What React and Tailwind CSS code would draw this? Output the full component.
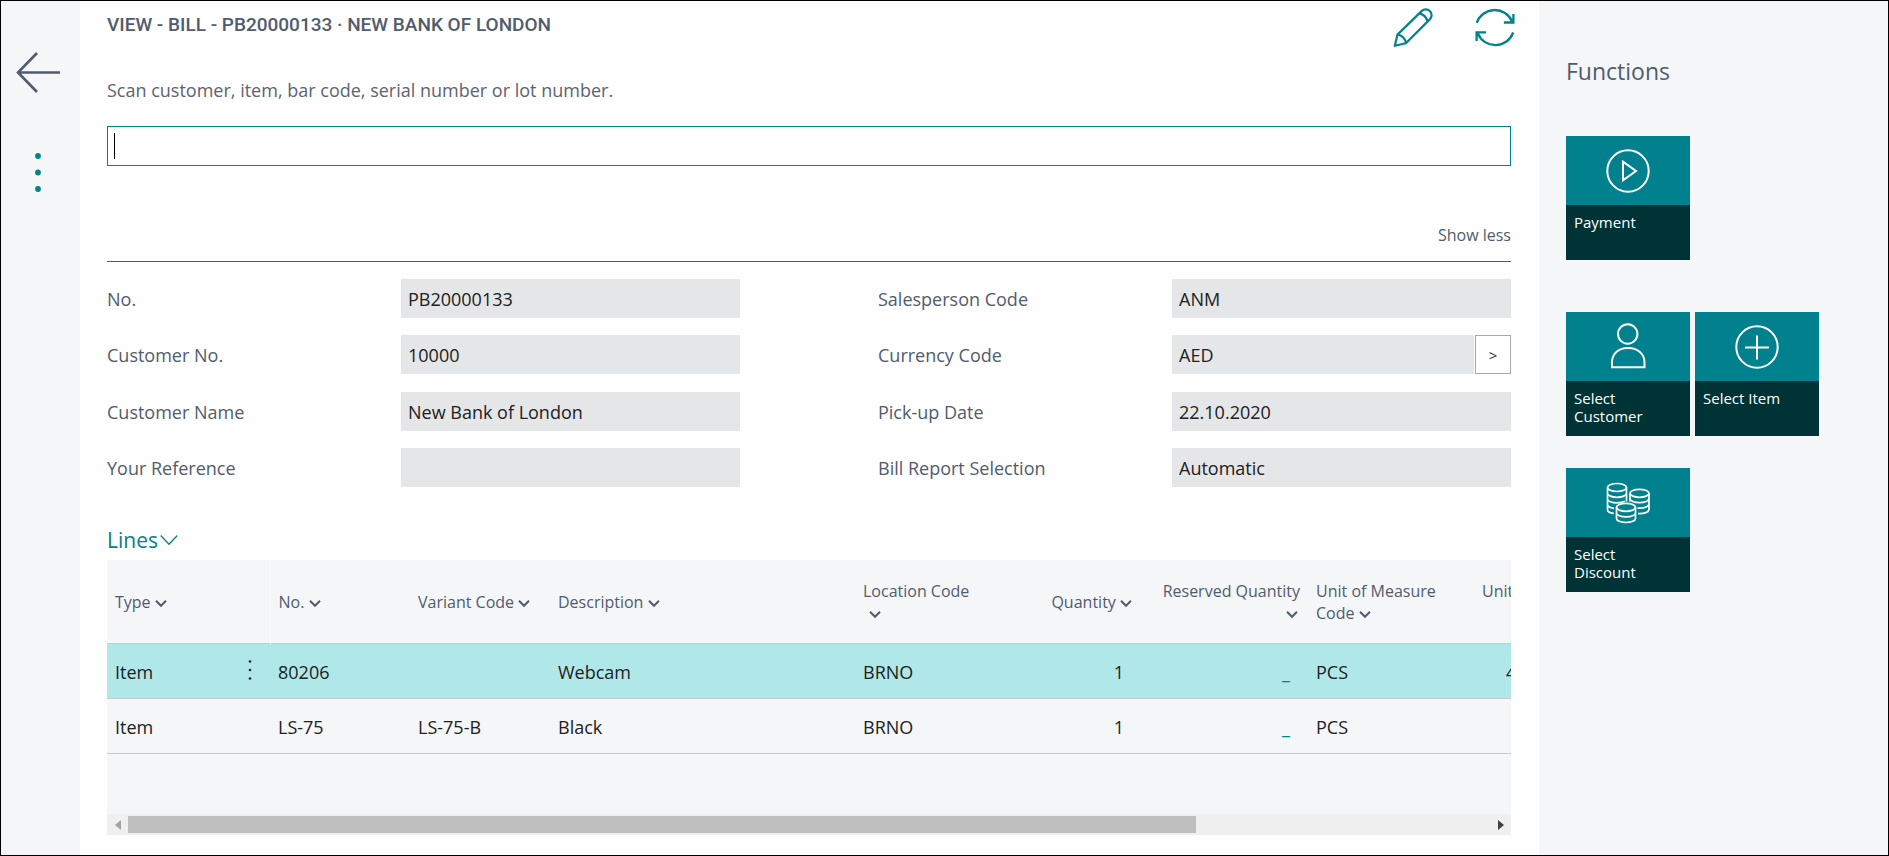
function Chevron({ className = "" }) {
  return (
    <svg viewBox="0 0 12 8" className={`inline-block h-2 w-3 ${className}`} fill="none" stroke="currentColor" strokeWidth="2" aria-hidden="true">
      <path d="M1 .8 6 5.8 11 .8" />
    </svg>
  );
}

function PlayIcon() {
  return (
    <svg viewBox="0 0 44 44" className="size-11" fill="none" stroke="currentColor" strokeWidth="2" aria-hidden="true">
      <circle cx="22" cy="22" r="20.7" />
      <path d="M17 12.6v18.8L30 22z" />
    </svg>
  );
}

function PersonIcon() {
  return (
    <svg viewBox="0 0 44 48" className="h-12 w-11" fill="none" stroke="currentColor" strokeWidth="2" aria-hidden="true">
      <circle cx="21.7" cy="11" r="9.7" />
      <path d="M6 44.2V39.5C6 30 13 25 22 25s16.5 5 16.5 14.5v4.7z" />
    </svg>
  );
}

function PlusIcon() {
  return (
    <svg viewBox="0 0 44 44" className="size-11" fill="none" stroke="currentColor" strokeWidth="2" aria-hidden="true">
      <circle cx="22" cy="22" r="20.7" />
      <path d="M22 10.5v24M10 22.5h24" />
    </svg>
  );
}

function CoinsIcon() {
  return (
    <svg viewBox="0 0 44 44" className="size-11" fill="none" stroke="currentColor" strokeWidth="1.7" aria-hidden="true">
      <ellipse cx="11" cy="6.5" rx="9.5" ry="4" />
      <path d="M1.5 6.5v22.3c0 1.8 2.6 3.2 6.2 3.6M20.5 6.5V20.6M1.5 12.3c0 2.2 4.2 4 9.5 4s9.5-1.8 9.5-4M1.5 17.9c0 2.2 4.2 4 9.5 4 3.2 0 6-.6 7.8-1.6M1.5 23.5c0 1.9 2.7 3.3 6.5 3.8" />
      <ellipse cx="33.5" cy="12.3" rx="9.5" ry="4" />
      <path d="M24 12.3v8.2M43 12.3v16.3c0 2.2-4.2 4-9.5 4h-1.5M24 17.6c0 2.2 4.2 4 9.5 4s9.5-1.8 9.5-4M31.5 27.1h2c5.3 0 9.5-1.8 9.5-4" />
      <ellipse cx="20" cy="26.3" rx="9.5" ry="4" />
      <path d="M10.5 26.3v11.2c0 2.2 4.2 4 9.5 4s9.5-1.8 9.5-4V26.3M10.5 31.9c0 2.2 4.2 4 9.5 4s9.5-1.8 9.5-4" />
    </svg>
  );
}

function Tile({ icon, label }) {
  return (
    <button type="button" className="flex h-[124px] w-[124px] flex-col bg-[#003336] text-left text-white">
      <span className="flex h-[69px] w-full items-center justify-center bg-[#00818d]">{icon}</span>
      <span className="pt-2 pr-6 pl-2 text-[15px] leading-[18px]">{label}</span>
    </button>
  );
}

function Field({ id, label, value, lookup }) {
  return (
    <div className="flex h-[39px] items-center">
      <label htmlFor={id} className="w-[294px] shrink-0 pt-0.5 text-[#505c6d]">{label}</label>
      <input id={id} readOnly defaultValue={value} className="h-full min-w-0 flex-1 bg-[#e5e6e7] px-[7px] pt-px text-[#212121] outline-none" />
      {lookup && (
        <button type="button" aria-label="Open currency code" className="ml-px h-full w-9 border border-[#a6a8aa] bg-white text-[15px] text-[#333333]">
          &gt;
        </button>
      )}
    </div>
  );
}

const leftFields = [
  { id: "no", label: "No.", value: "PB20000133" },
  { id: "customer-no", label: "Customer No.", value: "10000" },
  { id: "customer-name", label: "Customer Name", value: "New Bank of London" },
  { id: "your-reference", label: "Your Reference", value: "" },
];

const rightFields = [
  { id: "salesperson", label: "Salesperson Code", value: "ANM" },
  { id: "currency", label: "Currency Code", value: "AED", lookup: true },
  { id: "pickup", label: "Pick-up Date", value: "22.10.2020" },
  { id: "report", label: "Bill Report Selection", value: "Automatic" },
];

const lines = [
  { no: "80206", variant: "", description: "Webcam", location: "BRNO", quantity: "1", unit: "PCS", price: "4", selected: true },
  { no: "LS-75", variant: "LS-75-B", description: "Black", location: "BRNO", quantity: "1", unit: "PCS", price: "", selected: false },
];

function LinesTable() {
  return (
    <div className="bg-[#f5f6f8]">
      <div className="h-[254px] overflow-hidden">
        <table className="w-[1786px] table-fixed border-collapse text-left text-[#212121]">
          <colgroup>
            <col className="w-[123px]" />
            <col className="w-[40px]" />
            <col className="w-[140px]" />
            <col className="w-[140px]" />
            <col className="w-[305px]" />
            <col className="w-[145px]" />
            <col className="w-[140px]" />
            <col className="w-[168px]" />
            <col className="w-[166px]" />
            <col />
          </colgroup>
          <thead className="text-base leading-[22px] text-[#505c6d]">
            <tr className="h-[83px] border-b border-[#c8cbce] [&>th]:px-2 [&>th]:pt-0.5 [&>th]:font-normal">
              <th>Type <Chevron /></th>
              <th className="border-r border-[#fbfbfc]"></th>
              <th>No. <Chevron /></th>
              <th className="whitespace-nowrap">Variant Code <Chevron /></th>
              <th>Description <Chevron /></th>
              <th>Location Code<br /><Chevron className="ml-1.5" /></th>
              <th className="text-right">Quantity <Chevron /></th>
              <th className="text-right whitespace-nowrap">Reserved Quantity<br /><Chevron className="mr-0.5" /></th>
              <th>Unit of Measure<br />Code <Chevron /></th>
              <th>Unit<br />&nbsp;</th>
            </tr>
          </thead>
          <tbody>
            {lines.map((line) => (
              <tr key={line.no} className={`h-[55px] border-b border-[#c8cbce] [&>td]:px-2 [&>td]:pt-[3px] ${line.selected ? "bg-[#b0e8ea]" : ""}`}>
                <td>Item</td>
                <td>
                  {line.selected && (
                    <button type="button" aria-label="Show more options" className="flex h-6 w-full items-start justify-center">
                      <svg viewBox="0 0 4 20" className="h-5 w-1" fill="currentColor" aria-hidden="true">
                        <circle cx="2" cy="1.5" r="1.3" />
                        <circle cx="2" cy="10" r="1.3" />
                        <circle cx="2" cy="18.5" r="1.3" />
                      </svg>
                    </button>
                  )}
                </td>
                <td>{line.no}</td>
                <td>{line.variant}</td>
                <td>{line.description}</td>
                <td>{line.location}</td>
                <td><div className="pr-2 text-right">{line.quantity}</div></td>
                <td><div className="pr-2.5 text-right"><a href="#reserved" className="text-[#00838b]">_</a></div></td>
                <td>{line.unit}</td>
                <td><div className="pl-6">{line.price}</div></td>
              </tr>
            ))}
          </tbody>
        </table>
      </div>
      <div className="flex h-[21px] items-center bg-[#efefef]">
        <button type="button" aria-label="Scroll left" className="flex h-full w-[21px] items-center justify-center text-[#a3a3a3]">
          <svg viewBox="0 0 6 10" className="h-2.5 w-1.5" fill="currentColor" aria-hidden="true"><path d="M6 0v10L0 5z" /></svg>
        </button>
        <div className="flex-1">
          <div className="h-[17px] w-[calc(100%-294px)] bg-[#bfbfbf]"></div>
        </div>
        <button type="button" aria-label="Scroll right" className="flex h-full w-[21px] items-center justify-center text-[#404040]">
          <svg viewBox="0 0 6 10" className="h-2.5 w-1.5" fill="currentColor" aria-hidden="true"><path d="M0 0v10l6-5z" /></svg>
        </button>
      </div>
    </div>
  );
}

export default function App() {
  return (
    <div className="flex min-h-screen border border-black bg-[#f5f6f8] font-['Open_Sans','Noto_Sans',sans-serif] text-[18px]">
      <nav className="flex w-[79px] shrink-0 flex-col items-start pl-[15px]">
        <button type="button" aria-label="Back" className="mt-[51px] text-[#505c6d]">
          <svg viewBox="0 0 46 42" className="h-[42px] w-[46px]" fill="none" stroke="currentColor" strokeWidth="2.6" aria-hidden="true">
            <path d="M21 1 2 20.5 21 40M2 20.5h42" />
          </svg>
        </button>
        <button type="button" aria-label="More actions" className="mt-[58px] flex w-[44px] justify-center text-[#00838b]">
          <svg viewBox="0 0 8 42" className="h-[42px] w-2" fill="currentColor" aria-hidden="true">
            <circle cx="4" cy="4" r="2.9" />
            <circle cx="4" cy="20.5" r="2.9" />
            <circle cx="4" cy="37" r="2.9" />
          </svg>
        </button>
      </nav>

      <main className="flex min-w-0 flex-1 flex-col bg-[#fefefe] pr-7 pb-5 pl-[27px]">
        <header className="flex justify-between pt-[7px]">
          <h1 className="pt-px font-['Roboto',sans-serif] text-[19px] leading-8 font-medium text-[#505c6d]">
            VIEW - BILL - PB20000133 · NEW BANK OF LONDON
          </h1>
          <div className="-mr-1 flex gap-[42px] text-[#00838b]">
            <button type="button" aria-label="Edit">
              <svg viewBox="0 0 40 40" className="size-10" fill="none" stroke="currentColor" strokeWidth="2.2" strokeLinejoin="round" aria-hidden="true">
                <path d="M1.8 37.8 4.5 26.6 28.8 2.9a5.8 5.8 0 0 1 8.2 8.2L12.9 35.2zM4.5 26.6a9.5 9.5 0 0 1 8.4 8.6M26.3 5.4a11 11 0 0 1 8.2 8.2" />
              </svg>
            </button>
            <button type="button" aria-label="Refresh">
              <svg viewBox="0 0 40 40" className="size-10" fill="none" stroke="currentColor" strokeWidth="2.3" aria-hidden="true">
                <path d="M1.8 14.8A19 19 0 0 1 37.2 13.5M38.4 6v8.5h-9.5M38.2 24.5A19 19 0 0 1 2.8 25.5M1.6 33v-8.7H11" />
              </svg>
            </button>
          </div>
        </header>

        <label htmlFor="scan" className="mt-7 leading-7 text-[#5c6470]">
          Scan customer, item, bar code, serial number or lot number.
        </label>
        <div className="relative mt-[22px]">
          <input id="scan" type="text" className="block h-10 w-full border border-[#00838b] bg-white px-[6px] caret-transparent outline-none" />
          <span className="absolute top-[7px] left-[7px] h-[26px] w-px bg-black"></span>
        </div>

        <button type="button" className="mt-[57px] self-end text-base leading-6 text-[#505c6d]">Show less</button>

        <section className="mt-3.5 grid grid-cols-2 gap-x-[138px] border-t border-[#505c6d] pt-[17px]">
          <div className="flex h-[208px] flex-col justify-between">
            {leftFields.map((field) => <Field key={field.id} {...field} />)}
          </div>
          <div className="flex h-[208px] flex-col justify-between">
            {rightFields.map((field) => <Field key={field.id} {...field} />)}
          </div>
        </section>

        <h2 className="mt-[37px] mb-1 text-[21px] leading-8 text-[#00838b]">
          <button type="button" className="flex items-center gap-0.5">
            Lines
            <svg viewBox="0 0 18 12" className="h-3 w-[18px]" fill="none" stroke="currentColor" strokeWidth="1.3" aria-hidden="true">
              <path d="M.7 1.5 9 10.3l8.3-8.8" />
            </svg>
          </button>
        </h2>
        <LinesTable />
      </main>

      <aside className="w-[349px] shrink-0 pl-[27px]">
        <h2 className="mt-[54px] text-[23px] leading-8 text-[#505c6d]">Functions</h2>
        <div className="mt-[49px]">
          <Tile icon={<PlayIcon />} label="Payment" />
        </div>
        <div className="mt-[52px] flex gap-[5px]">
          <Tile icon={<PersonIcon />} label="Select Customer" />
          <Tile icon={<PlusIcon />} label="Select Item" />
        </div>
        <div className="mt-8">
          <Tile icon={<CoinsIcon />} label="Select Discount" />
        </div>
      </aside>
    </div>
  );
}
